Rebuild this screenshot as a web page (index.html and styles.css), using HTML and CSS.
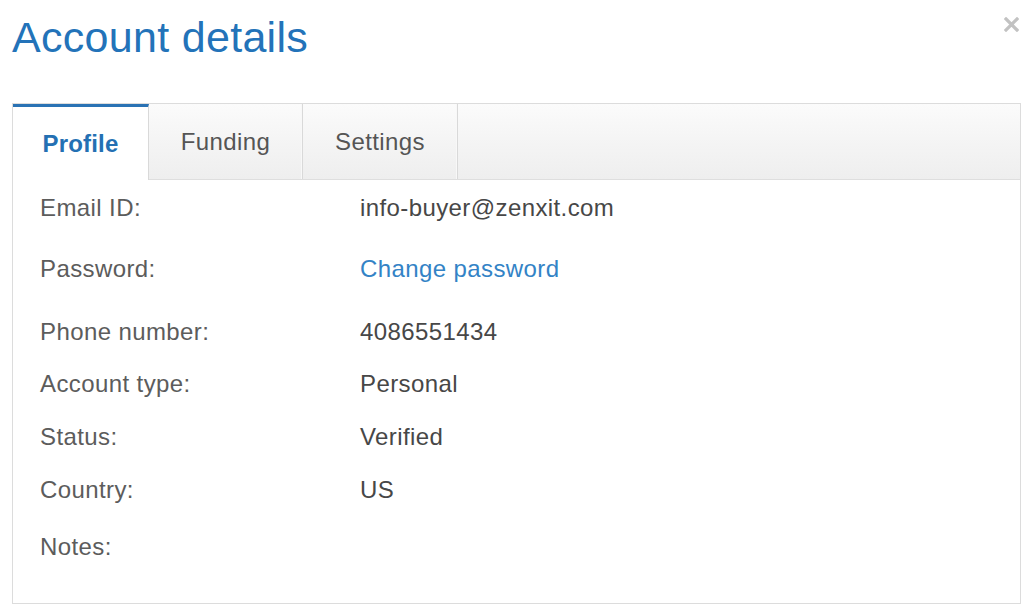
FILE: index.html
```html
<!DOCTYPE html>
<html lang="en">
<head>
<meta charset="utf-8">
<title>Account details</title>
<link rel="stylesheet" href="styles.css">
</head>
<body>
<div class="dialog">
  <header class="dialog-header">
    <h1 class="dialog-title">Account details</h1>
    <button class="close" aria-label="Close">
      <svg width="15" height="15" viewBox="0 0 15 15"><path d="M2 2 L13 13 M13 2 L2 13" stroke="#c2c2c2" stroke-width="3.2" stroke-linecap="square"/></svg>
    </button>
  </header>
  <section class="panel">
    <nav class="tabs">
      <a class="tab active">Profile</a>
      <a class="tab">Funding</a>
      <a class="tab">Settings</a>
    </nav>
    <div class="details">
      <div class="row email"><span class="label">Email ID:</span><span class="value">info-buyer@zenxit.com</span></div>
      <div class="row password"><span class="label">Password:</span><a class="value link">Change password</a></div>
      <div class="row phone"><span class="label">Phone number:</span><span class="value">4086551434</span></div>
      <div class="row"><span class="label">Account type:</span><span class="value">Personal</span></div>
      <div class="row"><span class="label">Status:</span><span class="value">Verified</span></div>
      <div class="row country"><span class="label">Country:</span><span class="value">US</span></div>
      <div class="row last"><span class="label">Notes:</span><span class="value"></span></div>
    </div>
  </section>
</div>
</body>
</html>
```

FILE: styles.css
```css
html, body {
  margin: 0;
  padding: 0;
  background: #ffffff;
}

body {
  font-family: "Liberation Sans", Arial, Helvetica, sans-serif;
  width: 1035px;
  height: 614px;
  overflow: hidden;
}

.dialog {
  padding: 0 14px 0 12px;
}

.dialog-header {
  display: flex;
  justify-content: space-between;
  align-items: flex-start;
  height: 103px;
}

.dialog-title {
  margin: 12px 0 0 0;
  font-size: 43px;
  line-height: 50px;
  font-weight: normal;
  color: #2373b9;
  letter-spacing: 0.3px;
}

.close {
  margin: 16px 2px 0 0;
  padding: 0;
  border: 0;
  background: none;
  width: 16px;
  height: 16px;
  display: flex;
  align-items: center;
  justify-content: center;
}

.panel {
  border: 1px solid #dcdcdc;
  height: 499px;
}

.tabs {
  display: flex;
  height: 75px;
  border-bottom: 1px solid #dedede;
  background: linear-gradient(#fbfbfb, #eeeeee);
}

.tab {
  display: flex;
  align-items: center;
  justify-content: center;
  padding: 0 32px;
  font-size: 24px;
  letter-spacing: 0.4px;
  color: #555555;
  border-right: 1px solid #d9d9d9;
  box-shadow: inset -1px 0 0 #f8f8f8;
}

.tab.active {
  padding: 0 30px;
  width: 75px;
  background: #ffffff;
  color: #2470b3;
  font-weight: bold;
  letter-spacing: 0.2px;
  border-top: 3px solid #2a72b4;
  margin-bottom: -1px;
  padding-top: 1px;
  box-shadow: none;
}

.tab:nth-child(2) { width: 89px; }
.tab:nth-child(3) { width: 90px; }

.details {
  padding: 13px 0 0 27px;
}

.row {
  display: flex;
  font-size: 24px;
  line-height: 30px;
  letter-spacing: 0.4px;
  margin-bottom: 23px;
}

.row.email { margin-bottom: 31px; }
.row.password { margin-bottom: 33px; }
.row.phone { margin-bottom: 22px; }
.row.country { margin-bottom: 27px; }
.row.last { margin-bottom: 0; }

.label {
  width: 320px;
  color: #5c5c5c;
}

.value {
  color: #474747;
}

.link {
  color: #3383c6;
}
```
